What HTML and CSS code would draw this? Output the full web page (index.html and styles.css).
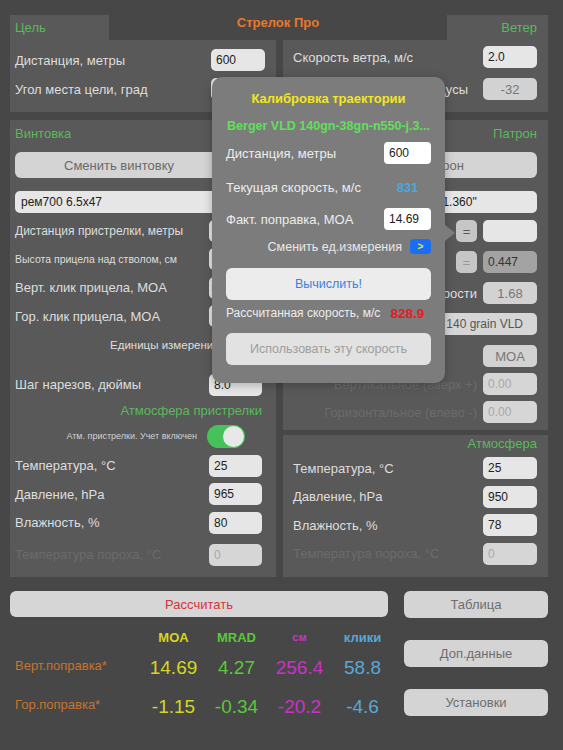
FILE: index.html
```html
<!DOCTYPE html>
<html lang="ru">
<head>
    <meta charset="UTF-8">
    <meta name="viewport" content="width=device-width, initial-scale=1.0">
    <title>Стрелок Про</title>
    <link rel="stylesheet" href="styles.css">
</head>
<body>
<div class="screen">
    <!-- Header with tabs -->
    <div class="top-head">
        <div class="tab">Цель</div>
        <div class="app-title">Стрелок Про</div>
        <div class="tab tab-right">Ветер</div>
    </div>

    <div class="top-body">
        <div class="panel target">
            <div class="row"><span class="label">Дистанция, метры</span><input class="field" type="text" value="600"></div>
            <div class="row"><span class="label">Угол места цели, град</span><input class="field" type="text" value=""></div>
        </div>
        <div class="panel wind">
            <div class="row"><span class="label">Скорость ветра, м/с</span><input class="field" type="text" value="2.0"></div>
            <div class="row"><span class="label">Направление ветра, градусы</span><input class="field dim" type="text" value="-32"></div>
        </div>
    </div>

    <div class="mid">
        <!-- Rifle -->
        <div class="panel rifle">
            <div class="panel-title">Винтовка</div>
            <button class="change-btn rifle-btn">Сменить винтовку</button>
            <input class="field name-field" type="text" value="рем700 6.5x47">
            <div class="row"><span class="label tight">Дистанция пристрелки, метры</span><input class="field" type="text" value=""></div>
            <div class="row"><span class="label small">Высота прицела над стволом, см</span><input class="field" type="text" value=""></div>
            <div class="row"><span class="label">Верт. клик прицела, MOA</span><input class="field" type="text" value=""></div>
            <div class="row"><span class="label">Гор. клик прицела, MOA</span><input class="field" type="text" value=""></div>
            <div class="row units-row"><span class="label units-label">Единицы измерения</span></div>
            <div class="row twist-row"><span class="label">Шаг нарезов, дюймы</span><input class="field" type="text" value="8.0"></div>
            <div class="panel-title sub-title">Атмосфера пристрелки</div>
            <div class="row toggle-row">
                <span class="note">Атм. пристрелки. Учет включен</span>
                <span class="switch"><span class="knob"></span></span>
            </div>
            <div class="row"><span class="label">Температура, °C</span><input class="field" type="text" value="25"></div>
            <div class="row"><span class="label">Давление, hPa</span><input class="field" type="text" value="965"></div>
            <div class="row"><span class="label">Влажность, %</span><input class="field" type="text" value="80"></div>
            <div class="row powder-row"><span class="label off">Температура пороха, °C</span><input class="field off" type="text" value="0"></div>
        </div>

        <div class="right-col">
            <!-- Cartridge -->
            <div class="panel cart">
                <div class="panel-title right">Патрон</div>
                <button class="change-btn">Сменить патрон</button>
                <input class="field name-field" type="text" value="Berger VLD 140gn, длина 1.360&quot;">
                <div class="row end">
                    <span class="pair"><button class="eq">=</button><input class="field" type="text" value=""></span>
                </div>
                <div class="row end">
                    <span class="pair"><button class="eq muted">=</button><input class="field dark" type="text" value="0.447"></span>
                </div>
                <div class="row end">
                    <span class="label">Коэф. скорости</span><input class="field dim" type="text" value="1.68">
                </div>
                <div class="row bullet-row"><span class="bullet-name">Berger 6.5mm 140 grain VLD</span></div>
                <div class="row end moa-row">
                    <button class="field dim moa-btn">MOA</button>
                </div>
                <div class="row end off-row">
                    <span class="label off">Вертикальное (вверх +)</span><input class="field off" type="text" value="0.00">
                </div>
                <div class="row end off-row">
                    <span class="label off">Горизонтальное (влево -)</span><input class="field off" type="text" value="0.00">
                </div>
            </div>

            <!-- Atmosphere -->
            <div class="panel atmo">
                <div class="panel-title right">Атмосфера</div>
                <div class="row"><span class="label">Температура, °C</span><input class="field" type="text" value="25"></div>
                <div class="row"><span class="label">Давление, hPa</span><input class="field" type="text" value="950"></div>
                <div class="row"><span class="label">Влажность, %</span><input class="field" type="text" value="78"></div>
                <div class="row"><span class="label off">Температура пороха, °C</span><input class="field off" type="text" value="0"></div>
            </div>
        </div>
    </div>

    <!-- Results -->
    <div class="bottom">
        <div>
            <button class="calc-btn">Рассчитать</button>
            <div class="results">
                <span></span>
                <span class="head c-moa">MOA</span>
                <span class="head c-mrad">MRAD</span>
                <span class="head c-cm">см</span>
                <span class="head c-click">клики</span>

                <span class="res-label">Верт.поправка*</span>
                <span class="val c-moa">14.69</span>
                <span class="val c-mrad">4.27</span>
                <span class="val c-cm">256.4</span>
                <span class="val c-click">58.8</span>

                <span class="res-label">Гор.поправка*</span>
                <span class="val c-moa">-1.15</span>
                <span class="val c-mrad">-0.34</span>
                <span class="val c-cm">-20.2</span>
                <span class="val c-click">-4.6</span>
            </div>
        </div>
        <div class="side">
            <button class="side-btn">Таблица</button>
            <button class="side-btn">Доп.данные</button>
            <button class="side-btn">Установки</button>
        </div>
    </div>

    <!-- Calibration popover -->
    <div class="calib">
        <div class="calib-title">Калибровка траектории</div>
        <div class="calib-bullet">Berger VLD 140gn-38gn-n550-j.3...</div>
        <div class="row c-row1"><span class="label">Дистанция, метры</span><input class="field" type="text" value="600"></div>
        <div class="row c-row2"><span class="label">Текущая скорость, м/с</span><span class="speed">831</span></div>
        <div class="row c-row3"><span class="label">Факт. поправка, MOA</span><input class="field" type="text" value="14.69"></div>
        <div class="units-switch"><span>Сменить ед.измерения</span><button class="units-btn">&gt;</button></div>
        <button class="wide-btn">Вычислить!</button>
        <div class="result-row"><span>Рассчитанная скорость, м/с</span><span class="result-val">828.9</span></div>
        <button class="wide-btn muted">Использовать эту скорость</button>
    </div>
</div>
</body>
</html>
```

FILE: styles.css
```css
* {
    box-sizing: border-box;
}

body {
    margin: 0;
    background-color: #474747;
    font-family: "Liberation Sans", Arial, sans-serif;
    color: #dedede;
}

input, button {
    font-family: inherit;
    outline: none;
}

.screen {
    position: relative;
    width: 563px;
    height: 750px;
    padding: 15px 15px 0 10px;
}

/* Header */
.top-head {
    display: flex;
    height: 25px;
}

.tab {
    width: 99px;
    background-color: #595959;
    color: #5cb85c;
    font-size: 13px;
    line-height: 16px;
    padding: 5px 0 0 5px;
}

.tab-right {
    width: 101px;
    text-align: right;
    padding: 5px 11px 0 0;
}

.app-title {
    flex: 1;
    text-align: center;
    color: #e8782a;
    font-weight: bold;
    font-size: 13px;
    line-height: 15px;
}

.top-body,
.mid {
    display: grid;
    grid-template-columns: 266px 265px;
    gap: 7px;
}

.mid {
    height: 457px;
    margin-top: 8px;
}

.panel {
    background-color: #595959;
    display: flex;
    flex-direction: column;
}

.target {
    height: 72px;
    padding: 9px 11px 0 5px;
    gap: 7px;
}

.wind {
    padding: 6px 11px 0 10px;
    gap: 10px;
}

/* Rows */
.row {
    display: flex;
    align-items: center;
    justify-content: space-between;
    height: 22px;
    flex-shrink: 0;
}

.row.end {
    justify-content: flex-end;
    gap: 6px;
}

.label {
    font-size: 13px;
    color: #dedede;
    white-space: nowrap;
}

.label.tight {
    font-size: 12px;
}

.label.small {
    font-size: 10.5px;
}

.label.off {
    color: #6b6b6b;
}

.field {
    width: 54px;
    height: 22px;
    flex-shrink: 0;
    border: none;
    border-radius: 5px;
    background-color: #e6e6e6;
    color: #222;
    font-size: 12px;
    padding: 0 5px;
}

.field.dim {
    background-color: #d2d2d2;
    color: #777;
    text-align: center;
    font-size: 13px;
}

.field.off {
    background-color: #d6d6d6;
    color: #a8a8a8;
}

.field.dark {
    background-color: #a3a3a3;
    color: #333;
}

.panel-title {
    color: #5cb85c;
    font-size: 13px;
    line-height: 15px;
}

.panel-title.right {
    text-align: right;
}

.change-btn {
    height: 26px;
    border: none;
    border-radius: 6px;
    background-color: #d4d4d4;
    color: #6a6a6a;
    font-size: 13px;
    flex-shrink: 0;
}

.name-field {
    width: 100%;
    padding: 0 6px;
}

/* Rifle panel */
.rifle {
    padding: 6px 14px 0 5px;
}

.rifle > * + * {
    margin-top: 6.5px;
}

.rifle .field {
    width: 53px;
}

.rifle .name-field {
    width: 100%;
    margin-top: 13px;
}

.rifle > .rifle-btn {
    width: 208px;
    margin-top: 11px;
}

.units-row {
    justify-content: flex-start;
    padding-left: 95px;
}

.units-label {
    font-size: 11.5px;
}

.rifle > .twist-row {
    margin-top: 18px;
}

.sub-title {
    text-align: right;
}

.rifle > .sub-title {
    margin-top: 7px;
}

.toggle-row {
    height: 24px;
    justify-content: flex-end;
    gap: 10px;
    padding-right: 17px;
}

.note {
    font-size: 9px;
    color: #d0d0d0;
    white-space: nowrap;
}

.switch {
    display: flex;
    justify-content: flex-end;
    align-items: center;
    width: 38px;
    height: 23px;
    padding: 1px;
    border-radius: 12px;
    background-color: #45c35a;
}

.knob {
    width: 21px;
    height: 21px;
    border-radius: 50%;
    background-color: #e8e8e8;
}

.rifle > .powder-row {
    margin-top: 10px;
}

/* Cartridge panel */
.right-col {
    display: flex;
    flex-direction: column;
    gap: 5px;
}

.cart {
    height: 310px;
    padding: 6px 11px 0 10px;
}

.cart > * + * {
    margin-top: 9px;
}

.cart > .change-btn {
    margin-top: 11px;
}

.cart > .name-field {
    margin-top: 13px;
}

.cart > .name-field + .row {
    margin-top: 7px;
}

.cart > .moa-row {
    margin-top: 10px;
}

.cart > .off-row {
    margin-top: 6px;
}

.pair {
    display: flex;
    gap: 6px;
}

.eq {
    width: 21px;
    height: 22px;
    border: none;
    border-radius: 5px;
    background-color: #c6c6c6;
    color: #555;
    font-size: 13px;
    padding: 0;
}

.eq.muted {
    color: #9a9a9a;
}

.bullet-row {
    justify-content: flex-end;
    background-color: #d6d6d6;
    border-radius: 5px;
    padding-right: 14px;
}

.bullet-name {
    font-size: 12px;
    color: #555;
}

.moa-btn {
    padding: 0;
}

/* Atmosphere panel */
.atmo {
    flex: 1;
    padding: 1px 11px 0 10px;
}

.atmo > .row {
    margin-top: 6.5px;
}

.atmo > .panel-title + .row {
    margin-top: 6px;
}

/* Bottom */
.bottom {
    display: grid;
    grid-template-columns: 378px 144px;
    column-gap: 16px;
    margin-top: 14px;
}

.calc-btn {
    width: 100%;
    height: 26px;
    border: none;
    border-radius: 6px;
    background-color: #d6d6d6;
    color: #d8323c;
    font-size: 13px;
}

.results {
    display: grid;
    grid-template-columns: 132px repeat(4, 63px);
    grid-template-rows: 20px 42px 36px;
    align-items: center;
    margin-top: 10px;
}

.head {
    text-align: center;
    font-weight: bold;
    font-size: 13px;
}

.val {
    text-align: center;
    font-size: 19px;
}

.res-label {
    color: #c8742a;
    font-size: 13px;
    padding: 0 0 5px 5px;
}

.c-moa { color: #d6d61e; }
.c-mrad { color: #5ac83a; }
.c-cm { color: #cc30cc; }
.c-click { color: #58a8d8; }

.head.c-cm {
    font-size: 11px;
}

.side {
    display: flex;
    flex-direction: column;
    gap: 22px;
}

.side-btn {
    height: 27px;
    border: none;
    border-radius: 6px;
    background-color: #d4d4d4;
    color: #6e6e6e;
    font-size: 13px;
}

/* Calibration popover */
.calib {
    position: absolute;
    left: 212px;
    top: 77px;
    width: 233px;
    height: 306px;
    padding: 0 14px;
    display: flex;
    flex-direction: column;
    background-color: #7c7c7c;
    border-radius: 10px;
    box-shadow: 0 2px 10px rgba(0, 0, 0, 0.25);
}

.calib::after {
    content: "";
    position: absolute;
    right: -10px;
    top: 148px;
    border-left: 10px solid #7c7c7c;
    border-top: 8px solid transparent;
    border-bottom: 8px solid transparent;
}

.calib-title {
    margin-top: 14px;
    line-height: 16px;
    text-align: center;
    color: #f2e61c;
    font-weight: bold;
    font-size: 13px;
}

.calib-bullet {
    margin-top: 11px;
    line-height: 16px;
    text-align: center;
    color: #5fe05a;
    font-weight: bold;
    font-size: 12.5px;
    white-space: nowrap;
}

.calib .label {
    color: #ececec;
}

.calib .field {
    width: 47px;
    background-color: #fff;
    border-radius: 4px;
}

.c-row1 { margin-top: 8px; }
.c-row2 { margin-top: 12px; }
.c-row3 { margin-top: 10px; }

.speed {
    width: 47px;
    text-align: center;
    color: #4aa8e0;
    font-weight: bold;
    font-size: 13px;
}

.units-switch {
    margin-top: 9px;
    height: 15px;
    display: flex;
    justify-content: flex-end;
    align-items: center;
    gap: 8px;
    font-size: 12.5px;
    color: #e8e8e8;
}

.units-btn {
    width: 21px;
    height: 15px;
    padding: 0;
    border: none;
    border-radius: 4px;
    background-color: #1a6ef5;
    color: #f5e21a;
    font-size: 10px;
    font-weight: bold;
}

.wide-btn {
    height: 32px;
    margin-top: 14px;
    border: none;
    border-radius: 6px;
    background-color: #ececec;
    color: #3b7fe0;
    font-size: 12.5px;
    flex-shrink: 0;
}

.wide-btn.muted {
    margin-top: 11px;
    background-color: #e2e2e2;
    color: #9d9d9d;
}

.result-row {
    margin-top: 4px;
    height: 18px;
    display: flex;
    align-items: center;
    justify-content: space-between;
    font-size: 12px;
    color: #ececec;
}

.result-val {
    width: 47px;
    text-align: center;
    color: #e02020;
    font-weight: bold;
    font-size: 13.5px;
}
```
